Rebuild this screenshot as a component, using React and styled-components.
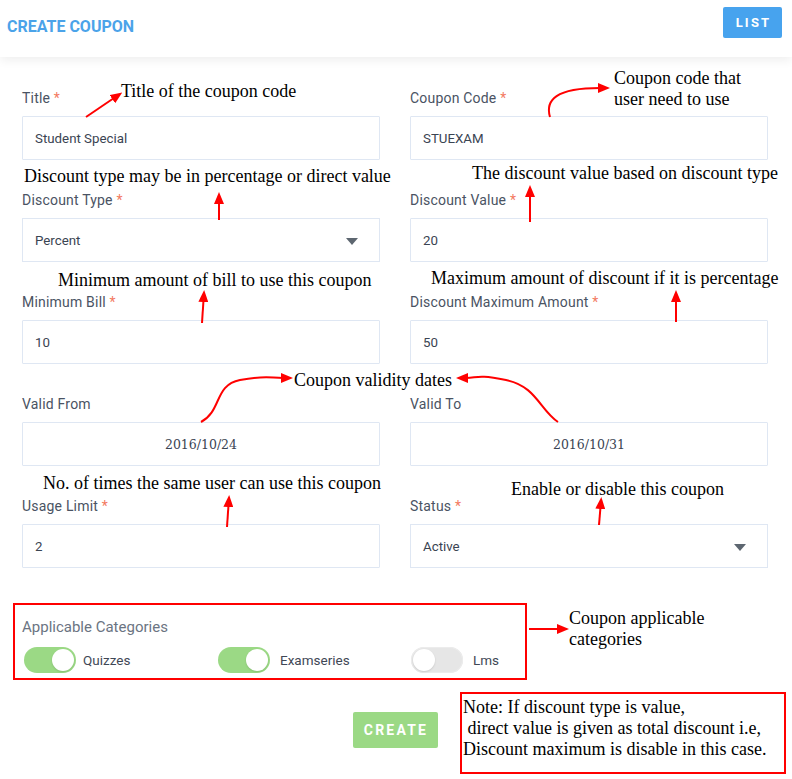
import styled, { createGlobalStyle } from "styled-components";

const GlobalStyle = createGlobalStyle`
    * { box-sizing: border-box; }
    body {
        margin: 0;
        background: #fff;
        font-family: Roboto, "Open Sans", Arial, sans-serif;
    }
`;

const Page = styled.div`
    position: relative;
    width: 792px;
    height: 779px;
    overflow: hidden;
    background: #fff;
`;

const Header = styled.div`
    height: 57px;
    display: flex;
    justify-content: space-between;
    align-items: flex-start;
    padding: 7px 10px 0 7px;
    background: #fff;
    box-shadow: 0 3px 10px rgba(0, 0, 0, 0.07);
`;

const PageTitle = styled.h1`
    margin: 11px 0 0;
    font-size: 16px;
    line-height: 18px;
    font-weight: 700;
    color: #4ba3e9;
`;

const Button = styled.button`
    border: none;
    border-radius: 2px;
    color: #fff;
    font-family: Roboto, Arial, sans-serif;
    font-weight: 700;
    font-size: ${(p) => (p.variant === "success" ? "14px" : "13px")};
    letter-spacing: 2.2px;
    cursor: pointer;
    background: ${(p) => (p.variant === "success" ? "#9bd985" : "#47a3ee")};
    width: ${(p) => (p.variant === "success" ? "85px" : "59px")};
    height: ${(p) => (p.variant === "success" ? "36px" : "31px")};
    padding: 0 0 0 2px;
`;

const Form = styled.div`
    padding: 31px 24px 0 22px;
`;

const Grid = styled.div`
    display: grid;
    grid-template-columns: 1fr 1fr;
    column-gap: 30px;
    row-gap: 30px;
`;

const Field = styled.div`
    display: flex;
    flex-direction: column;
`;

const Label = styled.label`
    font-size: 14px;
    line-height: 20px;
    color: #4a5363;
    margin-bottom: 8px;
    letter-spacing: 0.2px;
`;

const Req = styled.span`
    color: #f37a5f;
`;

const Input = styled.input`
    height: 44px;
    width: 100%;
    border: 1px solid #dfe7f3;
    border-radius: 1px;
    padding: 0 12px;
    font-family: ${(p) => (p.date ? '"DejaVu Serif", serif' : "Roboto, Arial, sans-serif")};
    font-size: ${(p) => (p.date ? "12.5px" : "13.3px")};
    text-align: ${(p) => (p.date ? "center" : "left")};
    color: #3a4452;
    outline: none;
    background: #fff;
`;

const SelectBox = styled.div`
    height: 44px;
    border: 1px solid #dfe7f3;
    padding: 0 21px 0 12px;
    display: flex;
    align-items: center;
    justify-content: space-between;
    font-size: 13.3px;
    color: #3a4452;
`;

const Caret = styled.span`
    width: 0;
    height: 0;
    margin-top: 3px;
    border-left: 6px solid transparent;
    border-right: 6px solid transparent;
    border-top: 7px solid #5d6670;
`;

const Categories = styled.div`
    margin: 35px 0 0 -9px;
    width: 514px;
    border: 2px solid #f00;
    padding: 12px 7px 5px;
`;

const CatTitle = styled.div`
    font-size: 15px;
    line-height: 20px;
    color: #6b7482;
    margin-bottom: 10px;
`;

const ToggleRow = styled.div`
    display: grid;
    grid-template-columns: 194px 193px 100px;
    margin-left: 2px;
`;

const ToggleItem = styled.div`
    display: flex;
    align-items: center;
    gap: ${(p) => p.gap || 8}px;
    font-size: 13.5px;
    color: #3f4856;
`;

const Switch = styled.span`
    position: relative;
    display: inline-block;
    width: 52px;
    height: 26px;
    border-radius: 13px;
    background: ${(p) => (p.on ? "#9bd985" : "#e6e6e6")};
    box-shadow: ${(p) => (p.on ? "none" : "inset 0 0 0 1px #ececec")};

    &::after {
        content: "";
        position: absolute;
        top: 2px;
        left: ${(p) => (p.on ? "28px" : "2px")};
        width: 22px;
        height: 22px;
        border-radius: 50%;
        background: #fff;
        box-shadow: 0 1px 2px rgba(0, 0, 0, 0.12);
    }
`;

const Actions = styled.div`
    display: flex;
    justify-content: center;
    margin-top: 32px;
`;

/* annotation layer drawn over the screenshot */
const Overlay = styled.svg`
    position: absolute;
    left: 0;
    top: 0;
    pointer-events: none;
`;

const Note = styled.div`
    position: absolute;
    left: ${(p) => p.x}px;
    top: ${(p) => p.y}px;
    font-family: "Liberation Serif", "Times New Roman", serif;
    font-size: 18px;
    line-height: 21px;
    color: #000;
    white-space: pre;
`;

const NoteBox = styled.div`
    position: absolute;
    left: 460px;
    top: 692px;
    width: 326px;
    height: 82px;
    border: 2px solid #f00;
    padding: 3px 0 0 1px;
    font-family: "Liberation Serif", "Times New Roman", serif;
    font-size: 18px;
    line-height: 21px;
    color: #000;
    white-space: pre;
    background: #fff;
`;

const fields = [
    { label: "Title", req: true, value: "Student Special" },
    { label: "Coupon Code", req: true, value: "STUEXAM" },
    { label: "Discount Type", req: true, value: "Percent", select: true },
    { label: "Discount Value", req: true, value: "20" },
    { label: "Minimum Bill", req: true, value: "10" },
    { label: "Discount Maximum Amount", req: true, value: "50" },
    { label: "Valid From", value: "2016/10/24", date: true },
    { label: "Valid To", value: "2016/10/31", date: true },
    { label: "Usage Limit", req: true, value: "2" },
    { label: "Status", req: true, value: "Active", select: true },
];

const arrows = [
    "M86 117 L114 98",
    "M550 117 C545 100 556 88 600 88",
    "M219 220 L219 202",
    "M530 222 L530 195",
    "M202 323 L203.5 300",
    "M676 322 L676 300",
    "M201 422 C222 411 214 385 240 380 S270 378 283 378",
    "M558 422 C540 410 536 386 506 380 S478 378 466 378",
    "M227 527 L228.5 505",
    "M599 525 L600.5 507",
    "M529 629 L559 629",
];

const App = () => {
    return (
        <Page>
            <GlobalStyle />
            <Header>
                <PageTitle>CREATE COUPON</PageTitle>
                <Button>LIST</Button>
            </Header>
            <Form>
                <Grid>
                    {fields.map((f) => (
                        <Field key={f.label}>
                            <Label>
                                {f.label} {f.req && <Req>*</Req>}
                            </Label>
                            {f.select ? (
                                <SelectBox>
                                    {f.value}
                                    <Caret />
                                </SelectBox>
                            ) : (
                                <Input date={f.date} defaultValue={f.value} readOnly />
                            )}
                        </Field>
                    ))}
                </Grid>
                <Categories>
                    <CatTitle>Applicable Categories</CatTitle>
                    <ToggleRow>
                        <ToggleItem gap={7}><Switch on />Quizzes</ToggleItem>
                        <ToggleItem gap={10}><Switch on />Examseries</ToggleItem>
                        <ToggleItem gap={10}><Switch />Lms</ToggleItem>
                    </ToggleRow>
                </Categories>
                <Actions>
                    <Button variant="success">CREATE</Button>
                </Actions>
            </Form>

            <Overlay width="792" height="779" viewBox="0 0 792 779">
                <defs>
                    <marker id="head" markerUnits="userSpaceOnUse" markerWidth="12" markerHeight="10" refX="2" refY="5" orient="auto">
                        <path d="M0 0 L12 5 L0 10 Z" fill="#f00" />
                    </marker>
                </defs>
                {arrows.map((d) => (
                    <path key={d} d={d} fill="none" stroke="#f00" strokeWidth="2" markerEnd="url(#head)" />
                ))}
            </Overlay>
            <Note x={121} y={81}>Title of the coupon code</Note>
            <Note x={614} y={68}>{"Coupon code that\nuser need to use"}</Note>
            <Note x={24} y={166}>Discount type may be in percentage or direct value</Note>
            <Note x={472} y={163}>The discount value based on discount type</Note>
            <Note x={58} y={270}>Minimum amount of bill to use this coupon</Note>
            <Note x={431} y={268}>Maximum amount of discount if it is percentage</Note>
            <Note x={294} y={370}>Coupon validity dates</Note>
            <Note x={43} y={473}>No. of times the same user can use this coupon</Note>
            <Note x={511} y={479}>Enable or disable this coupon</Note>
            <Note x={569} y={608}>{"Coupon applicable\ncategories"}</Note>
            <NoteBox>{"Note: If discount type is value,\n direct value is given as total discount i.e,\nDiscount maximum is disable in this case."}</NoteBox>
        </Page>
    );
};

export default App;
